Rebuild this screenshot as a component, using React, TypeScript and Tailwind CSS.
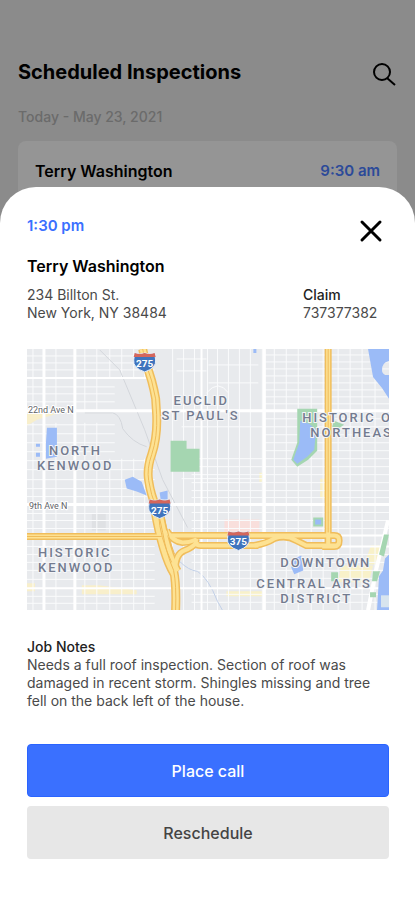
import React from 'react';

const WEST_COLUMNS = [6, 17, 29, 58, 70, 83, 95, 107, 118];
const MID_COLUMNS = [146, 157, 168, 181, 191, 202, 213, 224, 236];
const EAST_COLUMNS = [248, 260, 272, 285, 297, 312, 324, 336, 349];
const WEST_ROWS = [7, 14, 21, 38, 45, 53, 76, 85, 94, 103, 112, 121, 131, 140, 148, 165, 172, 180, 198, 206, 214, 222, 231, 248, 255];
const EAST_ROWS = [6, 13, 20, 27, 34, 41, 48, 55, 70, 78, 86, 94, 102, 110, 118, 126, 134, 142, 149, 164, 172, 180, 206, 214, 222, 230, 246, 254];

const DISTRICTS = [
  { x: 147, y: 56, name: 'EUCLID' },
  { x: 135, y: 71, name: "ST PAUL'S" },
  { x: 22, y: 106, name: 'NORTH' },
  { x: 10, y: 121, name: 'KENWOOD' },
  { x: 276, y: 73, name: 'HISTORIC O' },
  { x: 284, y: 88, name: 'NORTHEAS' },
  { x: 11, y: 209, name: 'HISTORIC' },
  { x: 11, y: 224, name: 'KENWOOD' },
  { x: 254, y: 219, name: 'DOWNTOWN' },
  { x: 230, y: 240, name: 'CENTRAL ARTS' },
  { x: 254, y: 255, name: 'DISTRICT' },
];

// Motorways, drawn twice: a wide dark casing, then a lighter fill
const MOTORWAYS = [
  'M0 188 H135',
  'M140 182 Q146 193 156 194 Q163 194 170 191',
  'M142 187 H300',
  'M149 222 Q148 206 158 202 Q166 199 171 193',
  'M170 190 Q167 197 174 197 H232',
  'M228 197 Q240 195 248 190 Q260 186 270 192 L280 197 H311',
  'M302 0 V198',
  'M300 187 H308 Q313 187 313 192 Q313 198 308 198 H296',
];

const INTERSTATE_275 =
  'M116 0 L119 14 Q126 32 129 50 L130 66 Q131 88 125 106 Q120 120 122 132 Q124 146 130 160 Q134 172 136 184 Q140 206 147 222 Q150 236 149 262';

function Shield({ x, y, label }: { x: number; y: number; label: string }) {
  return (
    <g transform={`translate(${x} ${y})`}>
      <path d="M-10 -9 Q-5 -7 0 -9 Q5 -7 10 -9 L11 -2 Q12 6 0 10 Q-12 6 -11 -2 Z" fill="#3f74bd" stroke="#e6edf7" />
      <path d="M-10 -9 Q-5 -7 0 -9 Q5 -7 10 -9 L11 -5 H-11 Z" fill="#d4665c" />
      <text y="5" textAnchor="middle" className="fill-white font-['Roboto',sans-serif] text-[10px] font-bold">
        {label}
      </text>
    </g>
  );
}

function AreaMap() {
  return (
    <svg viewBox="0 0 363 262" className="block h-auto w-full" role="img" aria-label="Map of the inspection area">
      <rect width="363" height="262" fill="#e8eaed" />

      {/* land use */}
      <path d="M0 65 H30 L10 71 L0 77 Z M0 235 H8 V243 H0 Z M55 237 H72 L110 242 V246 H55 Z" fill="#f8efcb" />
      <path d="M198 171 H233 V184 H198 Z" fill="#f9dfdc" />
      <path d="M315 217 H347 L343 234 H312 Z M345 197 H356 L349 216 H338 Z M200 243 H236 V248 H200 Z M294 130 H300 V150 H294 Z M233 124 H238 V133 H233 Z" fill="#f8f1c9" />
      <path d="M65 165 H79 V182 H65 Z" fill="#dfe1e4" />

      {/* local streets */}
      <g stroke="#fafbfc" fill="none">
        {WEST_COLUMNS.map((x) => (
          <path key={x} d={`M${x} 0 V${x > 80 ? 30 : 62} M${x} ${x > 80 ? 110 : 74} V262`} />
        ))}
        {MID_COLUMNS.map((x) => (
          <path key={x} d={`M${x} 0 V262`} />
        ))}
        {EAST_COLUMNS.map((x) => (
          <path key={x} d={`M${x} 0 V262`} />
        ))}
        {WEST_ROWS.map((y) => (
          <path key={y} d={`M0 ${y} H${y > 30 && y < 110 ? 88 : 128}`} />
        ))}
        {EAST_ROWS.map((y) => (
          <path key={y} d={`M${y < 110 ? 238 : 165} ${y} H363`} />
        ))}
        <path d="M150 10 H180 M150 22 H180 M182 16 H232 M182 34 H232 M155 78 H238 M155 130 H238 M180 44 Q192 30 202 44" />
      </g>

      {/* railway and creek */}
      <path d="M73 1 L93 21 L118 81 L136 131 L161 179" fill="none" stroke="#d3d6db" />
      <path d="M58 64 H86 Q94 66 96 80 Q106 94 120 98" fill="none" stroke="#d3d6db" />
      <path d="M153 213 Q162 222 171 223 Q182 230 191 253 L196 262" fill="none" stroke="#c2d0e8" />

      {/* avenues */}
      <g stroke="#fff" strokeWidth="3" fill="none">
        <path d="M0 62 H363 M0 156 H363 M48 0 V262 M238 0 V262 M17 0 V262" />
        <path d="M0 29 H120 M0 240 H363 M175 0 V262 M305 187 H363 M310 198 H363" strokeWidth="2" />
        <path d="M362 172 L350 222 L342 262" strokeWidth="4" />
      </g>

      {/* parks */}
      <g fill="#a5d6b1">
        <path d="M144 92 H160 V100 H173 V123 H144 Z" />
        <path d="M271 60 H291 V80 L291 102 L282 111 L271 118 L265 111 L271 94 Z" />
        <path d="M308 72 L318 76 L312 80 L306 78 Z" />
        <path d="M358 186 H363 L358 208 L353 206 Z M347 223 H354 L351 233 H346 Z M305 224 H312 V233 H305 Z M344 244 H350 V249 H344 Z M287 169 H297 V178 H287 Z" />
      </g>

      {/* water */}
      <g fill="#9bbbf7">
        <path d="M342 0 H363 V12 Q355 14 356 22 Q357 27 363 26 V50 L356 39 L347 28 Z" />
        <path d="M274 72 L283 75 L290 81 L288 101 L281 108 L271 115 L267 111 L273 94 Z" />
        <path d="M20 79 H30 V108 L19 110 V94 Z M9 95 H13 V98 H9 Z M9 104 H13 V108 H9 Z" />
        <path d="M98 131 L106 128 L115 133 L120 147 L110 143 L100 140 Z M133 144 L141 142 V151 H134 Z" />
        <path d="M268 210 L275 207 L277 222 L268 226 L265 219 Z M289 171 H295 V176 H289 Z M227 0 H230 V4 H227 Z" />
        <path d="M363 206 L359 210 L357 222 L353 228 L351 262 H363 Z" />
      </g>
      <path d="M355 247 H363 V259 H355 Z" fill="#d7e4ee" />

      <g fill="none" stroke="#f0bd5b">
        <path d={INTERSTATE_275} strokeWidth="9" />
        <path d="M130 160 Q138 206 149 224" strokeWidth="13" />
        {MOTORWAYS.map((d) => (
          <path key={d} d={d} strokeWidth="7" />
        ))}
      </g>
      <g fill="none" stroke="#fde293">
        <path d={INTERSTATE_275} strokeWidth="6" />
        <path d="M130 160 Q138 206 149 224" strokeWidth="10" />
        {MOTORWAYS.map((d) => (
          <path key={d} d={d} strokeWidth="4" />
        ))}
      </g>
      <g fill="none" stroke="#efbb58">
        <path d={INTERSTATE_275} />
        <path d="M132 166 Q133 188 145 214 M137 166 Q142 190 148 206" />
        <path d="M0 188 H135 M302 0 V184" />
      </g>

      <g className="fill-[#5f6368] font-['Roboto',sans-serif] text-[9px]" stroke="#fff" strokeWidth="2" paintOrder="stroke">
        <text x="1" y="64">22nd Ave N</text>
        <text x="2" y="160">9th Ave N</text>
      </g>
      <g
        className="fill-[#737b8f] font-['Roboto',sans-serif] text-[13px] font-medium tracking-[2px]"
        stroke="#f4f5f7"
        strokeWidth="2"
        paintOrder="stroke"
      >
        {DISTRICTS.map(({ x, y, name }) => (
          <text key={`${name}-${y}`} x={x} y={y}>
            {name}
          </text>
        ))}
      </g>

      <Shield x={118} y={13} label="275" />
      <Shield x={133} y={160} label="275" />
      <Shield x={212} y={192} label="375" />
    </svg>
  );
}

function ScheduleHeader() {
  return (
    <header className="relative bg-[#e8e8e8] px-[18px] pt-14">
      <div className="flex items-start justify-between">
        <h1 className="text-[20px] leading-8 font-bold text-black">Scheduled Inspections</h1>
        <button type="button" aria-label="Search" className="mt-1.5">
          <svg viewBox="0 0 26 26" className="size-[26px]" fill="none" stroke="#000" strokeWidth="2">
            <circle cx="11" cy="10" r="8" />
            <path d="M16 16 L24 23" />
          </svg>
        </button>
      </div>
      <p className="mt-[17px] text-[14px] leading-6 font-medium text-[#b2b2b2]">Today - May 23, 2021</p>
      <div className="mt-3 flex h-[82px] items-start justify-between rounded-lg bg-[#f8f8f8] px-[17px] pt-[18px]">
        <h2 className="text-[16px] leading-6 font-semibold text-black">Terry Washington</h2>
        <span className="text-[15px] leading-6 font-semibold text-[#4a7cff]">9:30 am</span>
      </div>
      <div className="absolute inset-0 bg-black/40" />
    </header>
  );
}

function InspectionSheet() {
  return (
    <section
      role="dialog"
      aria-label="Inspection details"
      className="relative -mt-9 grow rounded-t-[36px] bg-white pt-[27px] pr-[26px] pb-10 pl-[27px]"
    >
      <div className="flex items-start justify-between">
        <p className="text-[15px] leading-6 font-semibold text-[#3a70ff]">1:30 pm</p>
        <button type="button" aria-label="Close" className="mt-[5px] mr-1.5">
          <svg viewBox="0 0 24 24" className="size-6" fill="none" stroke="#000" strokeWidth="3" strokeLinecap="round">
            <path d="M3 3 L21 21 M21 3 L3 21" />
          </svg>
        </button>
      </div>

      <h2 className="mt-[11px] text-[16px] leading-6 font-semibold text-black">Terry Washington</h2>
      <div className="mt-2 flex justify-between text-[14px] leading-[18px] text-[#4a4a4a]">
        <address className="not-italic">
          234 Billton St.
          <br />
          New York, NY 38484
        </address>
        <dl className="mr-2 w-[78px]">
          <dt className="font-medium text-[#222]">Claim</dt>
          <dd>737377382</dd>
        </dl>
      </div>

      <div className="mt-[27px]">
        <AreaMap />
      </div>

      <div className="mt-7 text-[14px] leading-[18px] text-[#4a4a4a]">
        <h3 className="font-medium text-[#222]">Job Notes</h3>
        <p>
          Needs a full roof inspection. Section of roof was damaged in recent storm. Shingles missing and tree fell on
          the back left of the house.
        </p>
      </div>

      <div className="mt-[34px] flex flex-col gap-[9px]">
        <button type="button" className="h-[53px] rounded-[4px] border border-[#2a64ff] bg-[#3a70ff] text-[16px] font-medium text-white">
          Place call
        </button>
        <button type="button" className="h-[53px] rounded-[4px] bg-[#e7e7e7] text-[16px] font-medium text-[#444]">
          Reschedule
        </button>
      </div>
    </section>
  );
}

export default function App() {
  return (
    <main className="flex min-h-screen flex-col bg-white font-['Inter',sans-serif]">
      <ScheduleHeader />
      <InspectionSheet />
    </main>
  );
}
